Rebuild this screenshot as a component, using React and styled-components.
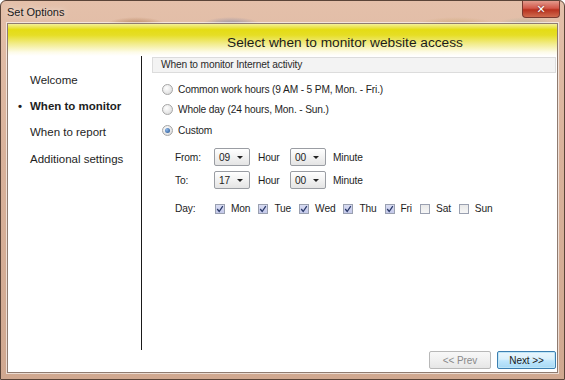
import React from "react";
import styled, { createGlobalStyle } from "styled-components";

const GlobalStyle = createGlobalStyle`
  html, body {
    margin: 0;
    padding: 0;
    background: #ffffff;
  }
  body {
    font-family: "Liberation Sans", Arial, sans-serif;
  }
`;

const Window = styled.div`
  width: 565px;
  height: 380px;
  box-sizing: border-box;
  display: flex;
  flex-direction: column;
  border: 1px solid #5a4438;
  border-radius: 6px 6px 0 0;
  background:
    radial-gradient(ellipse 30px 8px at 135px 24px, rgba(150, 90, 40, 0.6), transparent),
    radial-gradient(ellipse 30px 8px at 230px 24px, rgba(90, 110, 160, 0.6), transparent),
    radial-gradient(ellipse 40px 8px at 455px 24px, rgba(190, 150, 80, 0.5), transparent),
    radial-gradient(ellipse 30px 8px at 525px 24px, rgba(140, 170, 150, 0.5), transparent),
    linear-gradient(180deg, #e4c0aa 0%, #d9b29b 40%, #d0a890 100%);
  overflow: hidden;
`;

const TitleBar = styled.div`
  height: 22px;
  display: flex;
  align-items: flex-start;
  justify-content: space-between;
  padding-left: 6px;
`;

const TitleText = styled.span`
  font-size: 11px;
  color: #1a1a1a;
  line-height: 22px;
  text-shadow: 0 0 6px rgba(255, 255, 255, 0.9);
`;

const CloseButton = styled.div`
  width: 36px;
  height: 16px;
  margin-right: 4px;
  border: 1px solid #7a3a30;
  border-top: none;
  border-radius: 0 0 4px 4px;
  background: linear-gradient(180deg, #e39a8c 0%, #d2584a 45%, #b8321f 55%, #cf6a4e 100%);
  display: flex;
  align-items: center;
  justify-content: center;
  color: #ffffff;
  font-size: 11px;
  font-weight: bold;
  font-family: "DejaVu Sans", sans-serif;
  text-shadow: 0 0 2px #5a1a10;
`;

const Client = styled.div`
  flex: 1;
  margin: 0 6px 6px 6px;
  border: 1px solid #8f7b70;
  background: #ffffff;
  display: flex;
  flex-direction: column;
  box-shadow: 0 0 0 1px rgba(255, 255, 255, 0.6);
`;

const Header = styled.div`
  height: 32px;
  display: flex;
  align-items: center;
  justify-content: center;
  padding-left: 125px;
  background: linear-gradient(
    180deg,
    #f4ef9a 0%,
    #e4dc14 18%,
    #e6de26 35%,
    #f2ec8c 62%,
    #fdfbe8 88%,
    #ffffff 100%
  );
`;

const HeaderTitle = styled.span`
  font-size: 13.7px;
  color: #1b1b1b;
  margin-top: 4px;
`;

const Body = styled.div`
  flex: 1;
  display: flex;
`;

const Nav = styled.ul`
  width: 133px;
  margin: 0;
  padding: 17px 0 0 0;
  list-style: none;
  border-right: 1px solid #1a1a1a;
  display: flex;
  flex-direction: column;
  gap: 12.2px;
`;

const NavItem = styled.li`
  position: relative;
  font-size: 11.5px;
  line-height: 14px;
  padding-left: 22px;
  color: #1e1e1e;
  font-weight: ${(p) => (p.$active ? "bold" : "normal")};

  &::before {
    content: ${(p) => (p.$active ? '"•"' : '""')};
    position: absolute;
    left: 10px;
    top: 0;
    font-weight: bold;
  }
`;

const Content = styled.div`
  flex: 1;
  padding: 1px 1px 0 10px;
  display: flex;
  flex-direction: column;
  font-size: 10.2px;
  letter-spacing: -0.15px;
  color: #1e1e1e;
`;

const GroupHeader = styled.div`
  height: 14px;
  border: 1px solid #dcdcdc;
  background: #f3f3f3;
  line-height: 14px;
  color: #2a2a2a;
  padding-left: 8px;
`;

const Options = styled.div`
  display: flex;
  flex-direction: column;
  gap: 6.5px;
  padding: 9px 0 0 10px;
`;

const RadioRow = styled.label`
  display: flex;
  align-items: center;
  gap: 5px;
  height: 14px;
`;

const Radio = styled.span`
  width: 9px;
  height: 9px;
  border-radius: 50%;
  border: 1px solid #a6a6a6;
  background: radial-gradient(circle at 40% 35%, #ffffff 0%, #e6e6e6 60%, #cfcfcf 100%);
  display: flex;
  align-items: center;
  justify-content: center;

  &::after {
    content: "";
    width: 5px;
    height: 5px;
    border-radius: 50%;
    background: ${(p) => (p.$checked ? "radial-gradient(circle at 35% 35%, #8fb8e8, #1f4f8f)" : "transparent")};
  }
`;

const TimeGrid = styled.div`
  display: grid;
  grid-template-columns: 39px 36px 8px 32px 36px 7px auto;
  row-gap: 5px;
  align-items: center;
  padding: 11px 0 0 23px;
`;

const Label = styled.span`
  grid-column: ${(p) => p.$col};
`;

const Combo = styled.div`
  grid-column: ${(p) => p.$col};
  height: 16px;
  border: 1px solid #9a9da3;
  border-radius: 2px;
  background: linear-gradient(180deg, #ffffff 0%, #f2f2f2 50%, #e4e4e4 100%);
  display: flex;
  align-items: center;
  justify-content: space-between;
  padding: 0 6px 0 4px;

  &::after {
    content: "";
    border-left: 3px solid transparent;
    border-right: 3px solid transparent;
    border-top: 3px solid #222;
  }
`;

const DayRow = styled.div`
  display: flex;
  align-items: center;
  padding: 14px 0 0 23px;
`;

const DayLabel = styled.span`
  width: 40px;
`;

const DayItem = styled.label`
  display: flex;
  align-items: center;
  gap: 6px;
  margin-right: 8px;
`;

const Check = styled.span`
  width: 10px;
  height: 10px;
  box-sizing: border-box;
  border: 1px solid #9aa0b0;
  background: ${(p) =>
    p.$checked
      ? "linear-gradient(180deg, #d8dcf2 0%, #c4c9ea 100%)"
      : "linear-gradient(180deg, #e9e9e9 0%, #f6f6f6 100%)"};
  display: flex;
  align-items: center;
  justify-content: center;
`;

const Footer = styled.div`
  height: 21px;
  display: flex;
  justify-content: flex-end;
  align-items: flex-start;
  gap: 6px;
  padding: 1px 1px 0 0;
`;

const Button = styled.button`
  height: 18px;
  width: ${(p) => p.$w}px;
  padding: 0;
  border-radius: 2px;
  border: 1px solid ${(p) => (p.$primary ? "#3c7fb1" : "#b8b8b8")};
  background: ${(p) =>
    p.$primary
      ? "linear-gradient(180deg, #eaf6fd 0%, #d9f0fc 45%, #bee6fd 55%, #a7d9f5 100%)"
      : "linear-gradient(180deg, #f8f8f8 0%, #f0f0f0 50%, #e6e6e6 100%)"};
  box-shadow: ${(p) => (p.$primary ? "inset 0 0 0 1px #bfe6f8" : "none")};
  font-family: "Liberation Sans", Arial, sans-serif;
  font-size: 10px;
  letter-spacing: -0.1px;
  color: ${(p) => (p.$primary ? "#1a1a1a" : "#8a8a8a")};
`;

const days = [
  ["Mon", true],
  ["Tue", true],
  ["Wed", true],
  ["Thu", true],
  ["Fri", true],
  ["Sat", false],
  ["Sun", false],
];

const CheckMark = () => (
  <svg width="8" height="8" viewBox="0 0 8 8">
    <path d="M1.2 4 L3.2 6.5 L6.8 1.2" fill="none" stroke="#2b3a6a" strokeWidth="1.3" />
  </svg>
);

export default function App() {
  return (
    <>
      <GlobalStyle />
      <Window>
        <TitleBar>
          <TitleText>Set Options</TitleText>
          <CloseButton>✕</CloseButton>
        </TitleBar>
        <Client>
          <Header>
            <HeaderTitle>Select when to monitor website access</HeaderTitle>
          </Header>
          <Body>
            <Nav>
              <NavItem>Welcome</NavItem>
              <NavItem $active>When to monitor</NavItem>
              <NavItem>When to report</NavItem>
              <NavItem>Additional settings</NavItem>
            </Nav>
            <Content>
              <GroupHeader>When to monitor Internet activity</GroupHeader>
              <Options>
                <RadioRow>
                  <Radio />
                  Common work hours (9 AM - 5 PM, Mon. - Fri.)
                </RadioRow>
                <RadioRow>
                  <Radio />
                  Whole day (24 hours, Mon. - Sun.)
                </RadioRow>
                <RadioRow>
                  <Radio $checked />
                  Custom
                </RadioRow>
              </Options>
              <TimeGrid>
                <Label $col={1}>From:</Label>
                <Combo $col={2}>09</Combo>
                <Label $col={4}>Hour</Label>
                <Combo $col={5}>00</Combo>
                <Label $col={7}>Minute</Label>
                <Label $col={1}>To:</Label>
                <Combo $col={2}>17</Combo>
                <Label $col={4}>Hour</Label>
                <Combo $col={5}>00</Combo>
                <Label $col={7}>Minute</Label>
              </TimeGrid>
              <DayRow>
                <DayLabel>Day:</DayLabel>
                {days.map(([d, on]) => (
                  <DayItem key={d}>
                    <Check $checked={on}>{on && <CheckMark />}</Check>
                    {d}
                  </DayItem>
                ))}
              </DayRow>
            </Content>
          </Body>
          <Footer>
            <Button $w={62}>&lt;&lt; Prev</Button>
            <Button $w={59} $primary>Next &gt;&gt;</Button>
          </Footer>
        </Client>
      </Window>
    </>
  );
}
